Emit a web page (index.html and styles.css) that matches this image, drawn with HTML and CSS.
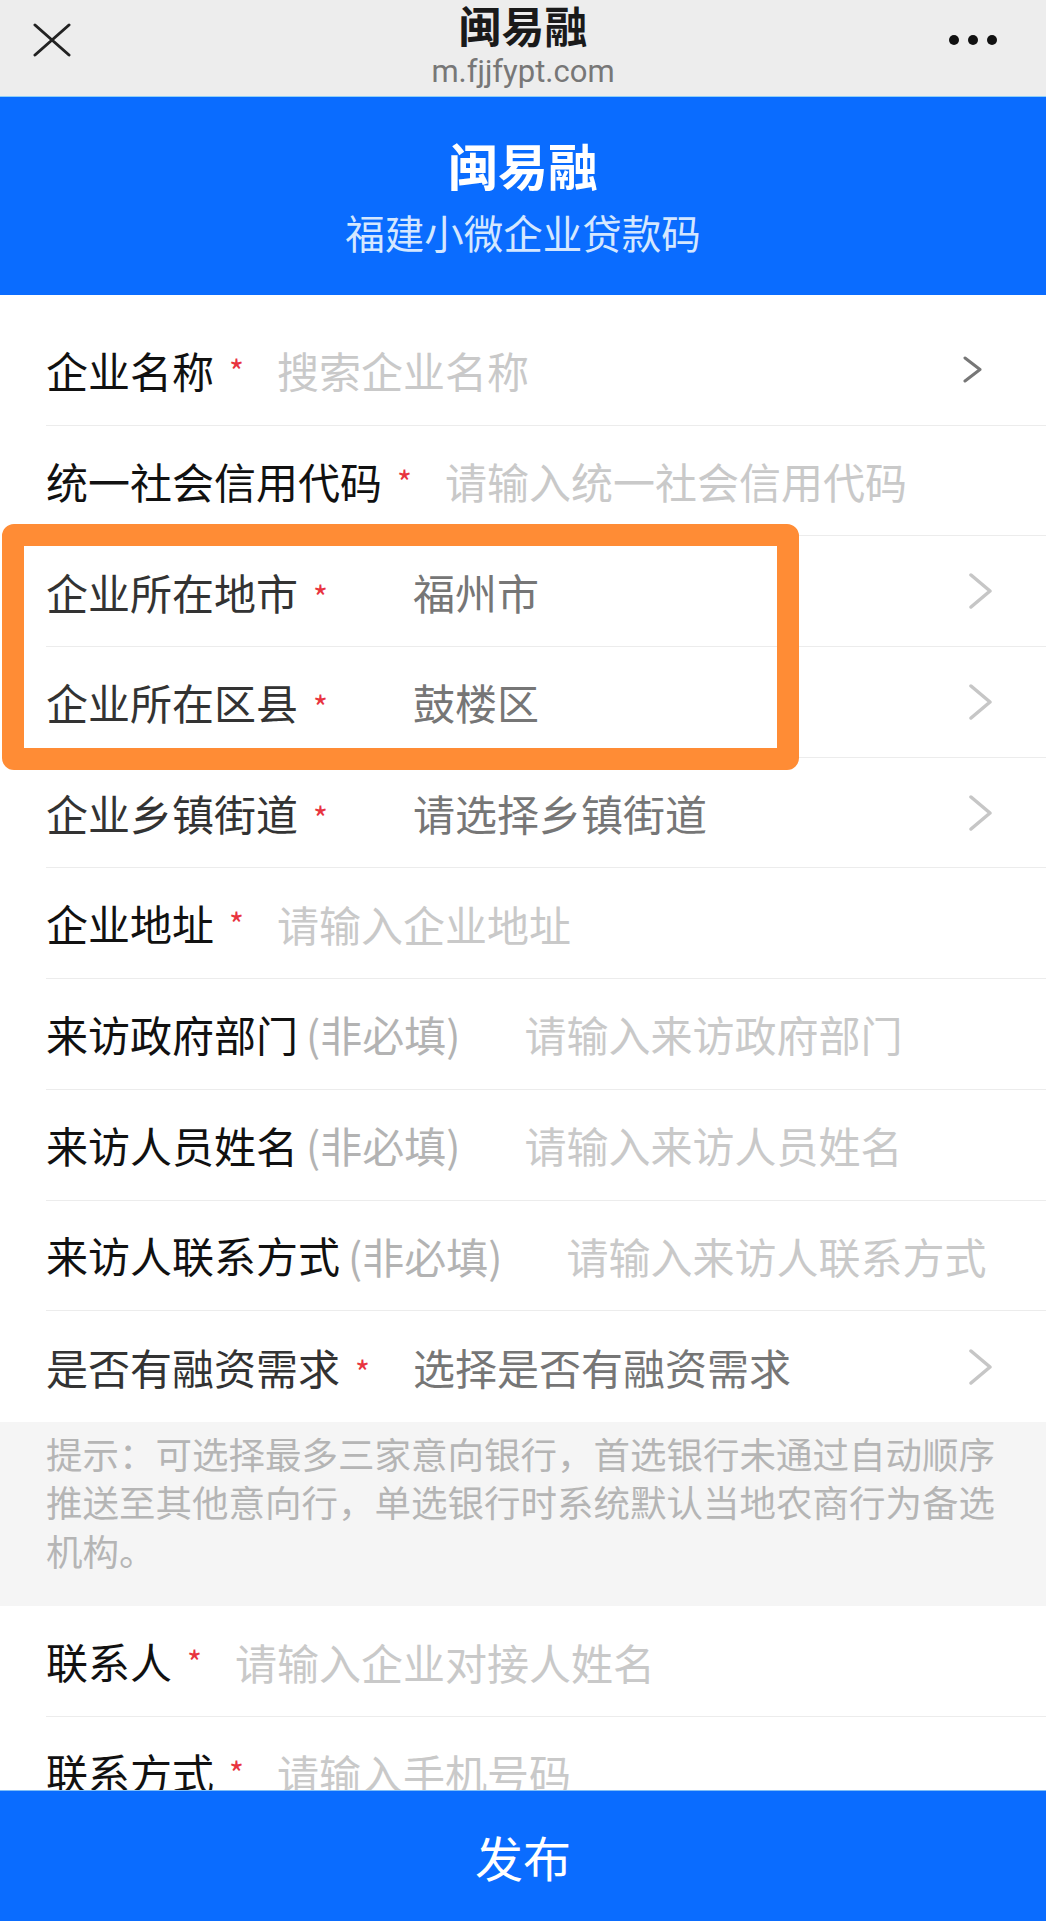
FILE: index.html
```html
<!DOCTYPE html>
<html lang="zh">
    <head>
        <meta charset="utf-8" />
        <meta name="viewport" content="width=device-width, initial-scale=1.0">
        <title>闽易融</title>
        <link rel="stylesheet" href="styles.css">
    </head>
    <body>
        <!-- 顶部导航 -->
        <div class="navbar">
            <svg class="nav-close" width="38" height="34" viewBox="0 0 38 34">
                <path d="M2 2 L36 32 M36 2 L2 32" stroke="#222" stroke-width="3" stroke-linecap="round" fill="none"/>
            </svg>
            <div class="nav-title">
                <div class="nav-name">闽易融</div>
                <div class="nav-url">m.fjjfypt.com</div>
            </div>
            <div class="nav-more"><i></i><i></i><i></i></div>
        </div>

        <header class="banner">
            <h1>闽易融</h1>
            <p>福建小微企业贷款码</p>
        </header>

        <div class="form first">
            <div class="row">
                <span class="label">企业名称</span><span class="req">*</span>
                <input class="field" placeholder="搜索企业名称">
                <svg class="arrow dark" width="19" height="27" viewBox="0 0 19 27"><polyline points="2,2 17,13.5 2,25" /></svg>
            </div>
            <div class="row">
                <span class="label">统一社会信用代码</span><span class="req">*</span>
                <input class="field" placeholder="请输入统一社会信用代码">
            </div>
            <div class="row picker">
                <span class="name"><span class="label">企业所在地市</span><span class="req">*</span></span>
                <span class="value">福州市</span>
                <svg class="arrow" width="25" height="36" viewBox="0 0 25 36"><polyline points="3,2 22,18 3,34" /></svg>
            </div>
            <div class="row picker">
                <span class="name"><span class="label">企业所在区县</span><span class="req">*</span></span>
                <span class="value">鼓楼区</span>
                <svg class="arrow" width="25" height="36" viewBox="0 0 25 36"><polyline points="3,2 22,18 3,34" /></svg>
            </div>
            <div class="row picker">
                <span class="name"><span class="label">企业乡镇街道</span><span class="req">*</span></span>
                <span class="value">请选择乡镇街道</span>
                <svg class="arrow" width="25" height="36" viewBox="0 0 25 36"><polyline points="3,2 22,18 3,34" /></svg>
            </div>
            <div class="row">
                <span class="label">企业地址</span><span class="req">*</span>
                <input class="field" placeholder="请输入企业地址">
            </div>
            <div class="row">
                <span class="label">来访政府部门</span><span class="opt">(非必填)</span>
                <input class="field" placeholder="请输入来访政府部门">
            </div>
            <div class="row">
                <span class="label">来访人员姓名</span><span class="opt">(非必填)</span>
                <input class="field" placeholder="请输入来访人员姓名">
            </div>
            <div class="row">
                <span class="label">来访人联系方式</span><span class="opt">(非必填)</span>
                <input class="field" placeholder="请输入来访人联系方式">
            </div>
            <div class="row picker">
                <span class="name"><span class="label">是否有融资需求</span><span class="req">*</span></span>
                <span class="value">选择是否有融资需求</span>
                <svg class="arrow" width="25" height="36" viewBox="0 0 25 36"><polyline points="3,2 22,18 3,34" /></svg>
            </div>
        </div>

        <div class="tip">提示：可选择最多三家意向银行，首选银行未通过自动顺序推送至其他意向行，单选银行时系统默认当地农商行为备选机构。</div>

        <div class="form">
            <div class="row">
                <span class="label">联系人</span><span class="req">*</span>
                <input class="field" placeholder="请输入企业对接人姓名">
            </div>
            <div class="row">
                <span class="label">联系方式</span><span class="req">*</span>
                <input class="field" placeholder="请输入手机号码">
            </div>
        </div>

        <button class="submit">发布</button>

        <!-- 标注框 -->
        <div class="mark"></div>
    </body>
</html>
```

FILE: styles.css
```css
* {
    box-sizing: border-box;
}

body {
    margin: 0;
    background-color: white;
    font-family: "Noto Sans CJK SC", "Noto Sans", sans-serif;
    color: #111;
    position: relative;
    min-height: 1921px;
}

.navbar {
    display: grid;
    grid-template-columns: 1fr auto 1fr;
    height: 96px;
    background-color: #ededed;
}

.nav-close {
    margin: 23px 0 0 33px;
}

.nav-title {
    padding-top: 2px;
    text-align: center;
}

.nav-name {
    font-size: 43px;
    line-height: 44px;
    font-weight: bold;
    color: #1a1a1a;
}

.nav-url {
    margin-top: 8px;
    font-family: Roboto, "Noto Sans", sans-serif;
    font-size: 31px;
    line-height: 36px;
    color: #777;
}

.nav-more {
    justify-self: end;
    display: flex;
    gap: 9px;
    margin: 35px 49px 0 0;
}

.nav-more i {
    width: 10px;
    height: 10px;
    border-radius: 50%;
    background-color: #111;
}

.banner {
    border-top: 1px solid #8fd0f7;
    background-color: #0a6cff;
    text-align: center;
    padding: 39px 0 40px;
}

.banner h1 {
    margin: 0;
    font-size: 50px;
    line-height: 56px;
    color: white;
}

.banner p {
    margin: 17px 0 0;
    font-size: 39.5px;
    line-height: 46px;
    color: #d4e7ff;
}

.form.first {
    padding-top: 20px;
}

.row {
    display: flex;
    align-items: center;
    height: 110.7px;
    margin-left: 46px;
    padding-right: 20px;
    border-bottom: 1px solid #ececec;
    font-size: 42px;
    white-space: nowrap;
}

.row:last-child {
    border-bottom: none;
}

.label {
    line-height: 1;
}

.req {
    display: inline-block;
    width: 63px;
    padding-left: 15px;
    font-size: 32px;
    color: #e8343f;
}

.opt {
    margin: 0 64px 0 8px;
    color: #b3b3b3;
}

.field {
    flex: 1;
    min-width: 0;
    border: none;
    outline: none;
    padding: 0;
    background: transparent;
    font: inherit;
    color: #111;
}

.field::placeholder {
    color: #c9c9c9;
}

.picker {
    padding-right: 53px;
}

.picker .label {
    color: #333;
}

.name {
    min-width: 367px;
}

.value {
    flex: 1;
    color: #767676;
}

.arrow {
    flex-shrink: 0;
}

.arrow polyline {
    fill: none;
    stroke: #c6c6c6;
    stroke-width: 3.5;
    stroke-linecap: round;
    stroke-linejoin: round;
}

.arrow.dark {
    margin-right: 44px;
}

.arrow.dark polyline {
    stroke: #777;
    stroke-width: 3;
}

.tip {
    background-color: #f5f5f5;
    padding: 8px 44px 31px 46px;
    font-size: 36.5px;
    line-height: 48.5px;
    color: #b5b5b5;
}

.submit {
    position: fixed;
    left: 0;
    bottom: 0;
    width: 100%;
    height: 131px;
    border: none;
    border-top: 1px solid #7fbdf7;
    background-color: #0a6cff;
    color: white;
    font-family: inherit;
    font-size: 48px;
}

.mark {
    position: absolute;
    left: 2px;
    top: 524px;
    width: 797px;
    height: 246px;
    border: 22px solid #ff8c35;
    border-radius: 12px;
}
```
